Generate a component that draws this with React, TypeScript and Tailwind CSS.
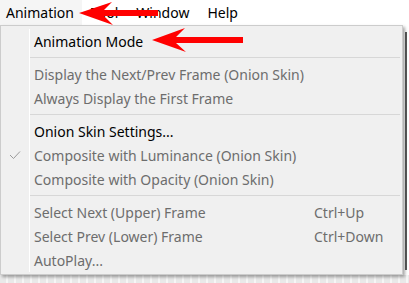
import React from 'react';

type Item =
  | { kind: 'sep' }
  | { kind: 'item'; label: string; enabled?: boolean; checked?: boolean; shortcut?: string };

const items: Item[] = [
  { kind: 'item', label: 'Animation Mode', enabled: true },
  { kind: 'sep' },
  { kind: 'item', label: 'Display the Next/Prev Frame (Onion Skin)' },
  { kind: 'item', label: 'Always Display the First Frame' },
  { kind: 'sep' },
  { kind: 'item', label: 'Onion Skin Settings...', enabled: true },
  { kind: 'item', label: 'Composite with Luminance (Onion Skin)', checked: true },
  { kind: 'item', label: 'Composite with Opacity (Onion Skin)' },
  { kind: 'sep' },
  { kind: 'item', label: 'Select Next (Upper) Frame', shortcut: 'Ctrl+Up' },
  { kind: 'item', label: 'Select Prev (Lower) Frame', shortcut: 'Ctrl+Down' },
  { kind: 'item', label: 'AutoPlay...' },
];

const menuBar = ['Animation', 'Tool', 'Window', 'Help'];

const Check = () => (
  <svg width="12" height="10" viewBox="0 0 12 10" fill="none">
    <polyline points="1,5 4.5,8.5 11,1.5" stroke="#9a9a9a" strokeWidth="1" />
  </svg>
);

export default function App() {
  return (
    <div
      className="relative w-[409px] h-[283px] overflow-hidden bg-white text-[14px]"
      style={{ fontFamily: '"Noto Sans", "Open Sans", sans-serif' }}
    >
      {/* menu bar */}
      <div className="flex h-[25px] items-center">
        {menuBar.map((m, i) => (
          <div
            key={m}
            className={
              i === 0
                ? 'flex h-[25px] items-center bg-[#f5f5f5] pl-[6px] pr-[8px] text-[#000]'
                : 'flex h-[25px] items-center px-[9px] text-[#000]'
            }
          >
            {m}
          </div>
        ))}
      </div>

      {/* background strip under the menu */}
      <div className="absolute left-0 right-0 bottom-0 h-[8px] bg-[repeating-linear-gradient(90deg,#e9e9e9_0px,#e9e9e9_6px,#f6f6f6_6px,#f6f6f6_8px)]" />
      <div className="absolute right-[2px] top-[32px] h-[238px] w-[2px] bg-[#5a5a5a]" />

      {/* dropdown */}
      <div className="absolute left-0 top-[25px] w-[403px] border border-[#cccccc] bg-[#f0f0f0] py-[3px] pb-[2px] shadow-[2px_2px_3px_rgba(0,0,0,0.35)]">
        {items.map((it, i) =>
          it.kind === 'sep' ? (
            <div key={i} className="flex h-[9px]">
              <div className="w-[29px] shrink-0 border-r border-white" />
              <div className="flex flex-1 items-center pr-[2px]">
                <div className="h-px w-full bg-[#d7d7d7]" />
              </div>
            </div>
          ) : (
            <div key={i} className="flex h-[24px] items-center">
              <div className="flex h-full w-[29px] shrink-0 items-center justify-center border-r border-white">
                {it.checked && <Check />}
              </div>
              <div className={`flex-1 pl-[4px] ${it.enabled ? 'text-[#000]' : 'text-[#6d6d6d]'}`}>
                {it.label}
              </div>
              {it.shortcut && (
                <div className="w-[88px] text-[#6d6d6d]">{it.shortcut}</div>
              )}
            </div>
          ),
        )}
      </div>

      {/* red arrows */}
      <svg className="pointer-events-none absolute left-0 top-0" width="409" height="283">
        <polygon
          points="79,13 112,2 104,10 158,10 158,16 104,16 113,25"
          fill="#ff0000"
        />
        <polygon
          points="152,40 185,28 176,37 243,37 243,43 176,43 186,52"
          fill="#ff0000"
        />
      </svg>
    </div>
  );
}
